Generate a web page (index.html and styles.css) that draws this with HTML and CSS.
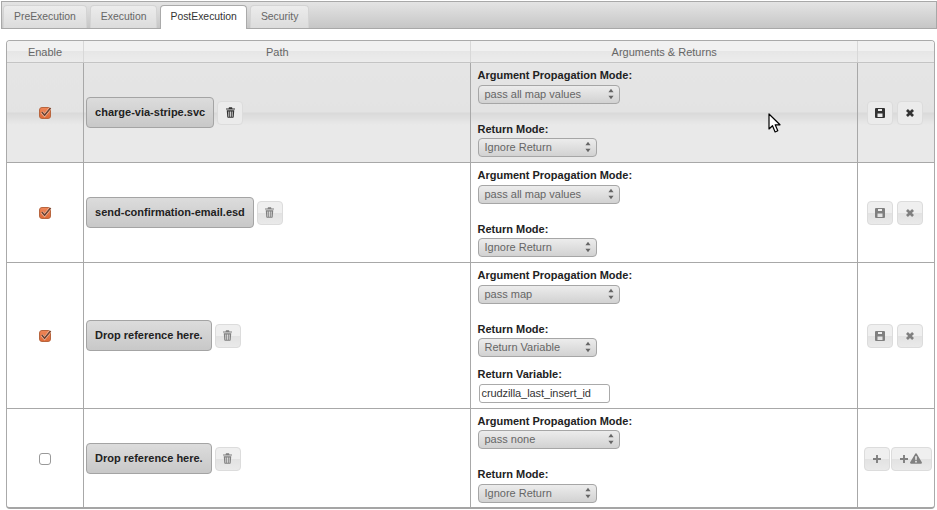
FILE: index.html
```html
<!DOCTYPE html>
<html lang="en">
<head>
    <meta charset="UTF-8">
    <title>PostExecution</title>
    <link rel="stylesheet" href="styles.css">
</head>
<body>
    <svg class="defs" width="0" height="0">
        <symbol id="i-check" viewBox="0 0 14 12">
            <path class="check-light" d="M3 5.500 6 9 12.500 1"/>
            <path class="check-dark" d="M3 5.500 6 9 12.500 1"/>
        </symbol>
        <symbol id="i-trash" viewBox="0 0 12 14">
            <path d="M4 0h4l.6 1.500H12V3H0V1.500h3.400zM1 4h10l-.7 9a1 1 0 0 1-1 1H2.700a1 1 0 0 1-1-1zM3.200 5.500v7h1.100v-7zm2.250 0v7h1.100v-7zm2.250 0v7h1.100v-7z" fill-rule="evenodd"/>
        </symbol>
        <symbol id="i-save" viewBox="0 0 10 10">
            <path d="M1 0h8a1 1 0 0 1 1 1v8a1 1 0 0 1-1 1H1a1 1 0 0 1-1-1V1a1 1 0 0 1 1-1zM3 1v2h4V1zM2.500 5.500V9h5V5.500z" fill-rule="evenodd"/>
        </symbol>
        <symbol id="i-x" viewBox="0 0 10 10">
            <path d="M2.400 0 5 2.600 7.600 0 10 2.400 7.400 5 10 7.600 7.600 10 5 7.400 2.400 10 0 7.600 2.600 5 0 2.400z"/>
        </symbol>
        <symbol id="i-plus" viewBox="0 0 10 10">
            <path d="M3.800 0h2.400v3.800H10v2.400H6.200V10H3.800V6.200H0V3.800h3.800z"/>
        </symbol>
        <symbol id="i-warn" viewBox="0 0 14 12">
            <path d="M7 0c.5 0 .9.3 1.100.7l5.700 9.700c.4.700-.1 1.600-.9 1.600H1.100c-.8 0-1.300-.9-.9-1.600L5.900.7C6.100.3 6.500 0 7 0zM6 3.500l.2 4.500h1.600L8 3.500zM6 9v1.800h2V9z" fill-rule="evenodd"/>
        </symbol>
        <symbol id="i-arrows" viewBox="0 0 7 14">
            <path d="M3.500 1 6.500 5H.5zM3.500 13 .5 9h6z"/>
        </symbol>
    </svg>

    <div class="tabbar">
        <a class="tab">PreExecution</a>
        <a class="tab">Execution</a>
        <a class="tab active">PostExecution</a>
        <a class="tab">Security</a>
    </div>

    <div class="panel">
        <table class="grid">
            <thead>
                <tr>
                    <th class="col-enable">Enable</th>
                    <th class="col-path">Path</th>
                    <th class="col-args">Arguments &amp; Returns</th>
                    <th class="col-actions"></th>
                </tr>
            </thead>
            <tbody>
                <tr class="row hovered">
                    <td class="cell-center"><span class="check on"><svg><use href="#i-check"/></svg></span></td>
                    <td>
                        <div class="path-line">
                            <span class="ref">charge-via-stripe.svc</span>
                            <button class="btn strong"><svg class="ic trash"><use href="#i-trash"/></svg></button>
                        </div>
                    </td>
                    <td class="args">
                        <label>Argument Propagation Mode:</label>
                        <div class="sel wide"><select><option>pass all map values</option></select><svg class="arrows"><use href="#i-arrows"/></svg></div>
                        <label class="gap">Return Mode:</label>
                        <div class="sel"><select><option>Ignore Return</option></select><svg class="arrows"><use href="#i-arrows"/></svg></div>
                    </td>
                    <td>
                        <div class="btns">
                            <button class="btn strong"><svg class="ic save"><use href="#i-save"/></svg></button>
                            <button class="btn strong"><svg class="ic x"><use href="#i-x"/></svg></button>
                        </div>
                    </td>
                </tr>
                <tr class="row">
                    <td class="cell-center"><span class="check on"><svg><use href="#i-check"/></svg></span></td>
                    <td>
                        <div class="path-line">
                            <span class="ref">send-confirmation-email.esd</span>
                            <button class="btn"><svg class="ic trash"><use href="#i-trash"/></svg></button>
                        </div>
                    </td>
                    <td class="args">
                        <label>Argument Propagation Mode:</label>
                        <div class="sel wide"><select><option>pass all map values</option></select><svg class="arrows"><use href="#i-arrows"/></svg></div>
                        <label class="gap">Return Mode:</label>
                        <div class="sel"><select><option>Ignore Return</option></select><svg class="arrows"><use href="#i-arrows"/></svg></div>
                    </td>
                    <td>
                        <div class="btns">
                            <button class="btn"><svg class="ic save"><use href="#i-save"/></svg></button>
                            <button class="btn"><svg class="ic x"><use href="#i-x"/></svg></button>
                        </div>
                    </td>
                </tr>
                <tr class="row">
                    <td class="cell-center"><span class="check on"><svg><use href="#i-check"/></svg></span></td>
                    <td>
                        <div class="path-line">
                            <span class="ref">Drop reference here.</span>
                            <button class="btn"><svg class="ic trash"><use href="#i-trash"/></svg></button>
                        </div>
                    </td>
                    <td class="args">
                        <label>Argument Propagation Mode:</label>
                        <div class="sel wide"><select><option>pass map</option></select><svg class="arrows"><use href="#i-arrows"/></svg></div>
                        <label class="gap">Return Mode:</label>
                        <div class="sel"><select><option>Return Variable</option></select><svg class="arrows"><use href="#i-arrows"/></svg></div>
                        <label class="gap-small">Return Variable:</label>
                        <input class="var-input" type="text" value="crudzilla_last_insert_id">
                    </td>
                    <td>
                        <div class="btns">
                            <button class="btn"><svg class="ic save"><use href="#i-save"/></svg></button>
                            <button class="btn"><svg class="ic x"><use href="#i-x"/></svg></button>
                        </div>
                    </td>
                </tr>
                <tr class="row">
                    <td class="cell-center"><span class="check"></span></td>
                    <td>
                        <div class="path-line">
                            <span class="ref">Drop reference here.</span>
                            <button class="btn"><svg class="ic trash"><use href="#i-trash"/></svg></button>
                        </div>
                    </td>
                    <td class="args">
                        <label>Argument Propagation Mode:</label>
                        <div class="sel wide"><select><option>pass none</option></select><svg class="arrows"><use href="#i-arrows"/></svg></div>
                        <label class="gap">Return Mode:</label>
                        <div class="sel"><select><option>Ignore Return</option></select><svg class="arrows"><use href="#i-arrows"/></svg></div>
                    </td>
                    <td>
                        <div class="btns tight">
                            <button class="btn"><svg class="ic plus"><use href="#i-plus"/></svg></button>
                            <button class="btn btn-wide"><svg class="ic plus"><use href="#i-plus"/></svg><svg class="ic warn"><use href="#i-warn"/></svg></button>
                        </div>
                    </td>
                </tr>
            </tbody>
        </table>
    </div>

    <svg class="cursor" width="14" height="21" viewBox="0 0 14 21">
        <path d="M1 1v15l3.500-3.300 2.600 6.300 2.700-1.200-2.600-6H12z" fill="#fff" stroke="#000" stroke-width="1.200" stroke-linejoin="round"/>
    </svg>
</body>
</html>
```

FILE: styles.css
```css
html, body {
    margin: 0;
    padding: 0;
}
body {
    position: relative;
    width: 937px;
    height: 510px;
    overflow: hidden;
    background-color: #fff;
    font-family: "Liberation Sans", Arial, sans-serif;
    font-size: 11px;
    color: #333;
}
.defs {
    position: absolute;
}
.tabbar {
    display: flex;
    gap: 3px;
    height: 28px;
    margin: 1px 0 0 1px;
    width: 936px;
    padding: 3px 0 0 1px;
    box-sizing: border-box;
    background: linear-gradient(#e4e4e4, #c6c6c6);
    border: 1px solid #a8a8a8;
}
.tab {
    height: 23px;
    padding: 0 10px;
    box-sizing: border-box;
    line-height: 22px;
    font-size: 10.400px;
    color: #666;
    background: linear-gradient(#ececec, #dcdcdc);
    border: 1px solid #d4d4d4;
    border-bottom: none;
    border-radius: 4px 4px 0 0;
}
.tab.active {
    height: 24px;
    padding: 0 9px;
    color: #333;
    background: #fff;
    border-color: #aaa;
}
.panel {
    margin: 11px 0 0 6px;
    width: 929px;
    height: 469px;
    box-sizing: border-box;
    border: 1px solid #aaa;
    border-bottom: 2px solid #a5a5a5;
    border-radius: 4px;
    overflow: hidden;
}
.grid {
    width: 927px;
    border-collapse: collapse;
    table-layout: fixed;
}
.grid th {
    height: 21px;
    padding: 0;
    font-size: 11px;
    font-weight: normal;
    color: #666;
    background: linear-gradient(#f1f1f1 0, #f1f1f1 50%, #e6e6e6 50%, #ececec 100%);
    border-right: 1px solid #d8d8d8;
    border-bottom: 1px solid #c4c4c4;
}
.grid th:last-child {
    border-right: none;
}
.col-enable { width: 76px; }
.col-path { width: 386px; }
.col-args { width: 385px; }
.col-actions { width: 76px; }
.row td {
    padding: 0;
    border-right: 1px solid #a8a8a8;
    border-bottom: 1px solid #a8a8a8;
    vertical-align: middle;
}
.row td:last-child {
    border-right: none;
}
.row:last-child td {
    border-bottom: none;
}
.row.hovered td {
    background: linear-gradient(#e5e5e5 0, #e3e3e3 50%, #d9d9d9 50%, #e9e9e9 62%, #e9e9e9 100%);
}
.cell-center {
    text-align: center;
}
.check {
    display: inline-block;
    position: relative;
    width: 10px;
    height: 10px;
    border: 1px solid #999;
    border-radius: 3px;
    background: #fff;
    vertical-align: middle;
}
.check.on {
    background: linear-gradient(#ef8557, #de6a38);
    border-color: #b8663f;
}
.check svg {
    position: absolute;
    left: -1px;
    top: -1px;
    width: 13px;
    height: 11px;
    overflow: visible;
}
.check-light {
    fill: none;
    stroke: #f7c9b0;
    stroke-width: 3;
}
.check-dark {
    fill: none;
    stroke: #6e4232;
    stroke-width: 1.800;
}
.path-line {
    display: flex;
    align-items: center;
    gap: 3px;
    padding-left: 2px;
}
.ref {
    display: inline-block;
    height: 31px;
    padding: 0 8px;
    line-height: 28px;
    box-sizing: border-box;
    font-weight: bold;
    font-size: 11px;
    color: #222;
    background: linear-gradient(#dcdcdc, #c8c8c8);
    border: 1px solid #a4a4a4;
    border-radius: 4px;
}
.btn {
    display: inline-flex;
    align-items: center;
    justify-content: center;
    width: 26px;
    height: 24px;
    padding: 0;
    background: linear-gradient(#efefef 0, #efefef 50%, #e2e2e2 50%, #eaeaea 100%);
    border: 1px solid #dcdcdc;
    border-radius: 4px;
}
.btn.strong {
    background: #ebebeb;
}
.btn-wide {
    width: 41px;
    gap: 2px;
}
.btns {
    display: flex;
    gap: 4px;
    padding-left: 9px;
}
.btns.tight {
    gap: 1px;
    padding-left: 6px;
}
.ic {
    fill: #808080;
}
.btn.strong .ic {
    fill: #333;
}
.trash { width: 9px; height: 11px; }
.save { width: 10px; height: 10px; }
.x { width: 8px; height: 8px; }
.plus { width: 8px; height: 8px; }
.warn { width: 12px; height: 11px; }
.row td.args {
    padding: 5px 0 5px 6px;
}
.args label {
    display: block;
    font-size: 11px;
    font-weight: bold;
    color: #222;
    line-height: 14px;
}
.args label.gap {
    margin-top: 18px;
}
.args label.gap-small {
    margin-top: 10px;
}
.sel {
    position: relative;
    width: 119px;
    height: 19px;
    margin: 2px 0 0 1px;
}
.sel.wide {
    width: 142px;
    margin-top: 3px;
}
.row:last-child .sel {
    margin-top: 3px;
}
.row:last-child .sel.wide {
    margin-top: 2px;
}
.sel select {
    display: block;
    width: 100%;
    height: 19px;
    padding: 0 0 2px 5px;
    appearance: none;
    font-family: inherit;
    font-size: 11px;
    color: #666;
    background: linear-gradient(#ececec, #d2d2d2);
    border: 1px solid #a6a6a6;
    border-radius: 4px;
}
.arrows {
    position: absolute;
    right: 6px;
    top: 3px;
    width: 6px;
    height: 12px;
    fill: #666;
}
.var-input {
    display: block;
    width: 131px;
    height: 19px;
    margin: 3px 0 0 2px;
    padding: 0 0 1px 1px;
    box-sizing: border-box;
    font-family: inherit;
    font-size: 11px;
    letter-spacing: -0.080px;
    color: #333;
    background: #fff;
    border: 1px solid #aaa;
    border-radius: 3px;
}
.cursor {
    position: absolute;
    left: 768px;
    top: 113px;
}
```
